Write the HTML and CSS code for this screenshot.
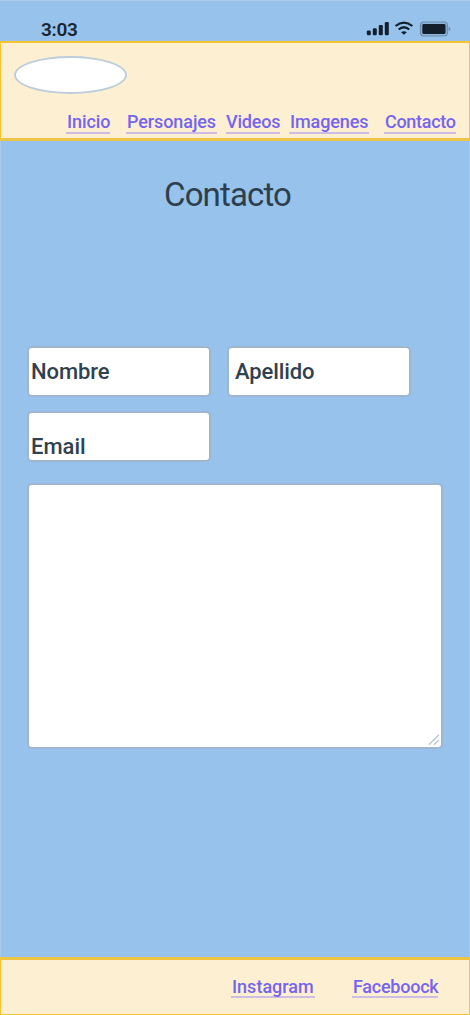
FILE: index.html
```html
<!DOCTYPE html>
<html lang="es">
<head>
<meta charset="utf-8">
<title>Contacto</title>
<link rel="stylesheet" href="styles.css">
</head>
<body>
<div class="screen">
  <div class="status">
    <span class="time">3:03</span>
    <svg class="indicators" width="86" height="18" viewBox="0 0 86 18">
      <g fill="#13202b">
        <rect x="1.8" y="10.5" width="4" height="4.8" rx="1.2"/>
        <rect x="7.8" y="8.2" width="4" height="7.1" rx="1.2"/>
        <rect x="13.8" y="5" width="4" height="10.3" rx="1.2"/>
        <rect x="19.8" y="2" width="4" height="13.3" rx="1.2"/>
        <path d="M36.1 12.2Q39 10.2 41.8 12.2L38.9 14.8Z"/>
        <rect x="57.4" y="4" width="23" height="10" rx="1.4"/>
      </g>
      <g fill="none" stroke="#13202b" stroke-width="2.2">
        <path d="M30.5 6Q38.9-.8 47.4 6"/>
        <path d="M33.6 9.5Q38.9 5 44.3 9.5"/>
      </g>
      <rect x="55.5" y="2" width="26.8" height="14" rx="3.2" fill="#84a8c9" fill-opacity=".5" stroke="#6d8ba7" stroke-width="1.2"/>
      <rect x="57.4" y="4" width="23" height="10" rx="1.4" fill="#13202b"/>
      <path d="M83.6 6.6Q85.4 7.5 85.4 9T83.6 11.4Z" fill="#6d8ba7"/>
    </svg>
  </div>
  <header class="header">
    <div class="logo"></div>
    <nav class="nav">
      <a class="link inicio">Inicio</a>
      <a class="link personajes">Personajes</a>
      <a class="link videos">Videos</a>
      <a class="link imagenes">Imagenes</a>
      <a class="link contacto">Contacto</a>
    </nav>
  </header>
  <main class="main">
    <h1 class="title">Contacto</h1>
    <form class="form">
      <div class="field nombre"><label>Nombre</label></div>
      <div class="field apellido"><label>Apellido</label></div>
      <div class="field email"><label>Email</label></div>
      <div class="message">
        <svg width="12" height="12" viewBox="0 0 12 12" fill="none" stroke="#b9c9d6" stroke-width="1.4"><path d="M.8 10.8 11 .8M6 10.8 11 6"/></svg>
      </div>
    </form>
  </main>
  <footer class="footer">
    <a class="link instagram">Instagram</a>
    <a class="link facebook">Faceboock</a>
  </footer>
</div>
</body>
</html>
```
FILE: styles.css
```css
* { box-sizing: border-box; }
body { margin: 0; font-family: Roboto, "Liberation Sans", sans-serif; }
.screen {
  width: 470px;
  height: 1015px;
  display: flex;
  flex-direction: column;
  background: #96c2ec;
  border-top: 1px solid #aacdef;
}
.status {
  height: 40px;
  display: flex;
  justify-content: space-between;
  padding: 19px 19px 0 41px;
}
.time { font-size: 19px; line-height: 20px; font-weight: 600; color: #182630; letter-spacing: -.3px; }
.header {
  height: 100px;
  border: 1px solid #f7c331;
  border-width: 2px 1px 3px 1px;
  border-bottom-color: #ecc548;
  background: #fdf0d2;
  padding: 13px 13px 0;
}
.logo {
  width: 113px;
  height: 38px;
  border: 2px solid #bdcdda;
  border-radius: 50%;
  background: #fff;
}
.nav { display: flex; margin: 18px 0 0 52px; }
.link {
  height: 22px;
  line-height: 20px;
  font-size: 18px;
  font-weight: 500;
  color: #7565ed;
  border-bottom: 2px solid #cdbce4;
  white-space: nowrap;
  padding-left: 1px;
}
.inicio { width: 44px; margin-right: 16px; letter-spacing: -.1px; }
.personajes { width: 91px; margin-right: 9px; letter-spacing: -.1px; }
.videos { width: 54px; margin-right: 9px; padding-left: 0; letter-spacing: -.2px; }
.imagenes { width: 80px; margin-right: 15px; letter-spacing: -.1px; }
.contacto { width: 72px; letter-spacing: -.3px; }
.main {
  height: 816px;
  padding: 32px 26px 0;
  border: solid #a5caee;
  border-width: 0 1px;
}
.title {
  margin: 0 0 129px 137px;
  font-size: 33px;
  line-height: 44px;
  font-weight: 400;
  letter-spacing: -.85px;
  color: #2d3f4d;
}
.form { display: grid; grid-template-columns: 184px 184px; column-gap: 16px; row-gap: 14px; }
.field {
  height: 51px;
  border: 2px solid #9fb7ce;
  border-radius: 5px;
  background: #fff;
  padding: 11px 0 0 2px;
  font-size: 22px;
  line-height: 26px;
  font-weight: 500;
  letter-spacing: -.1px;
  color: #30414f;
}
.apellido { padding-left: 6px; }
.email { padding-top: 21px; letter-spacing: 0; }
.message {
  grid-column: 1 / 3;
  width: 416px;
  height: 266px;
  margin-top: 7px;
  border: 2px solid #9fb7ce;
  border-radius: 5px;
  background: #fff;
  display: flex;
  justify-content: flex-end;
  align-items: flex-end;
  padding: 1px;
}
.footer {
  height: 58px;
  border: 1px solid #f7c331;
  border-width: 3px 1px 1px;
  border-top-color: #f0c443;
  background: #fdf0d2;
  display: flex;
  padding: 17px 0 0 230px;
}
.instagram { width: 84px; height: 21px; margin-right: 37px; }
.facebook { width: 86px; height: 21px; letter-spacing: -.25px; }
```
